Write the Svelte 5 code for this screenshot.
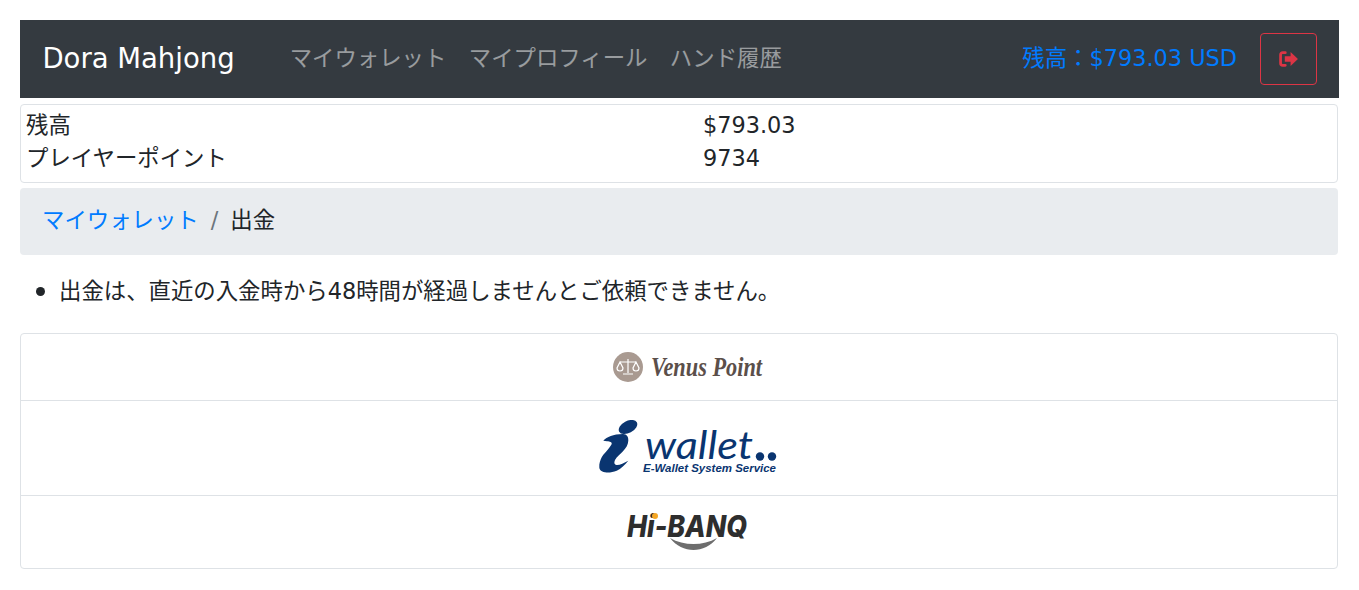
<script>
	const nav = ['マイウォレット', 'マイプロフィール', 'ハンド履歴'];
</script>

<div class="page">
	<nav class="navbar">
		<span class="brand">Dora Mahjong</span>
		<ul class="links">
			{#each nav as item}
				<li>{item}</li>
			{/each}
		</ul>
		<span class="balance">残高：$793.03 USD</span>
		<button class="logout" aria-label="logout">
			<svg width="20" height="18" viewBox="0 0 19 17">
				<path d="M6 2.5H3.5A2 2 0 0 0 1.5 4.5v8a2 2 0 0 0 2 2H6" fill="none" stroke="#dc3545" stroke-width="2.6" stroke-linecap="round" />
				<path d="M5.5 6H11V1.8L18 8.5l-7 6.7V11H5.5z" fill="#dc3545" />
			</svg>
		</button>
	</nav>

	<div class="info">
		<div class="row"><span>残高</span><span>$793.03</span></div>
		<div class="row"><span>プレイヤーポイント</span><span>9734</span></div>
	</div>

	<div class="breadcrumb">
		<a href="#wallet">マイウォレット</a>
		<span class="sep">/</span>
		<span>出金</span>
	</div>

	<ul class="notes">
		<li>出金は、直近の入金時から48時間が経過しませんとご依頼できません。</li>
	</ul>

	<div class="methods">
		<div class="method">
			<svg width="150" height="32" viewBox="0 0 150 32">
				<circle cx="15" cy="16" r="15" fill="#a99a91" />
				<g fill="none" stroke="#fff" stroke-width="1.2">
					<path d="M15 8v14M10 23h10M7 11h16" />
					<path d="M7 11l-3 6a3 3 0 0 0 6 0zM23 11l-3 6a3 3 0 0 0 6 0z" />
				</g>
				<text x="38" y="25" class="venus-text" textLength="111" lengthAdjust="spacingAndGlyphs">Venus Point</text>
			</svg>
		</div>
		<div class="method">
			<svg width="180" height="56" viewBox="0 0 180 56">
				<ellipse cx="30" cy="7" rx="10" ry="6" transform="rotate(-28 30 7)" fill="#0a3570" />
				<path d="M5.3 20.7C9 17 15 14 25 14C29 14 30.5 17 30.3 20.7C30 25 28 28 25 31.2C22 34.5 19 36 17 40C16 42.5 16 44.5 18.5 45C21.5 45.3 26 43 30.3 40.7C27 45 23 48.7 18.7 50.7C14.7 52.3 10.7 52.8 7 52.3C3 51.8 1.5 49.8 1.3 47.3C1 43.3 2.3 40.3 3.7 37.3C5.7 33.8 8.7 31.3 10.3 29C11.8 27 13.5 24.5 13.7 24C14 22 12 21.5 9 21.2z" fill="#0a3570" />
				<text x="47" y="39" class="wallet-text" textLength="108" lengthAdjust="spacingAndGlyphs">wallet</text>
				<circle cx="162" cy="36.5" r="4.2" fill="#0a3570" />
				<circle cx="174" cy="36.5" r="4.2" fill="#0a3570" />
				<text x="45" y="52" class="wallet-sub" textLength="133" lengthAdjust="spacingAndGlyphs">E-Wallet System Service</text>
			</svg>
		</div>
		<div class="method">
			<svg width="122" height="46" viewBox="0 0 122 46">
				<text x="0" y="28" class="banq-text" textLength="120" lengthAdjust="spacingAndGlyphs">Hi-BANQ</text>
				<circle cx="28" cy="7" r="3" fill="#f5a623" />
				<path d="M43 29c14 8 33 8 47 0-6 8-15 12-23.5 12S49 37 43 29z" fill="#6d6d6d" />
			</svg>
		</div>
	</div>
</div>

<style>
	:global(body) {
		font-family: 'DejaVu Sans', 'Noto Sans CJK JP', sans-serif;
		color: #212529;
		background: #fff;
	}

	.page {
		padding: 20px 21px 20px 20px;
		font-size: 22.4px;
		line-height: 33.6px;
	}

	.navbar {
		display: flex;
		align-items: center;
		height: 78px;
		margin-right: -1px;
		padding: 0 22px 0 22.4px;
		background: #343a40;
	}

	.brand {
		margin-right: 55px;
		color: #fff;
		font-size: 27.5px;
	}

	.links {
		display: flex;
		gap: 22.4px;
		flex: 1;
		margin: 0;
		padding: 0;
		list-style: none;
		color: rgba(255, 255, 255, 0.5);
	}

	.balance {
		margin-right: 23px;
		color: #007bff;
	}

	.logout {
		display: flex;
		align-items: center;
		justify-content: center;
		width: 57px;
		height: 52px;
		padding: 0;
		background: transparent;
		border: 1px solid #dc3545;
		border-radius: 4px;
	}

	.info {
		margin-top: 6px;
		padding: 4px 5px 8px;
		border: 1px solid #dee2e6;
		border-radius: 4px;
	}

	.row {
		display: grid;
		grid-template-columns: 677px 1fr;
		line-height: 32.5px;
	}

	.breadcrumb {
		display: flex;
		align-items: center;
		gap: 12px;
		height: 67px;
		margin-top: 5px;
		padding: 0 22px 2px;
		box-sizing: border-box;
		background: #e9ecef;
		border-radius: 4px;
	}

	.breadcrumb a {
		color: #007bff;
		text-decoration: none;
	}

	.sep {
		color: #6c757d;
	}

	.notes {
		margin: 20px 0 24px;
		padding: 0 0 0 16px;
		list-style: none;
	}

	.notes li {
		display: flex;
		align-items: center;
		gap: 14px;
	}

	.notes li::before {
		content: '';
		flex: none;
		width: 9px;
		height: 9px;
		border-radius: 50%;
		background: #212529;
	}

	.methods {
		border: 1px solid #dee2e6;
		border-radius: 4px;
	}

	.method {
		display: flex;
		align-items: center;
		justify-content: center;
		height: 66px;
		padding-left: 17px;
	}

	.method + .method {
		border-top: 1px solid #dee2e6;
		height: 94px;
	}

	.method + .method + .method {
		height: 72px;
	}

	.method svg {
		display: block;
	}

	.venus-text {
		font-family: 'Liberation Serif', serif;
		font-style: italic;
		font-weight: 700;
		font-size: 27px;
		fill: #5b4f4a;
	}

	.wallet-text {
		font-family: 'Lato', sans-serif;
		font-style: italic;
		font-weight: 400;
		font-size: 38px;
		fill: #0a3570;
	}

	.wallet-sub {
		font-family: 'Liberation Sans', sans-serif;
		font-style: italic;
		font-weight: 700;
		font-size: 11px;
		fill: #0a3570;
	}

	.banq-text {
		font-family: 'Inter', sans-serif;
		font-style: italic;
		font-weight: 800;
		font-size: 30px;
		fill: #2e2e2e;
	}
</style>
